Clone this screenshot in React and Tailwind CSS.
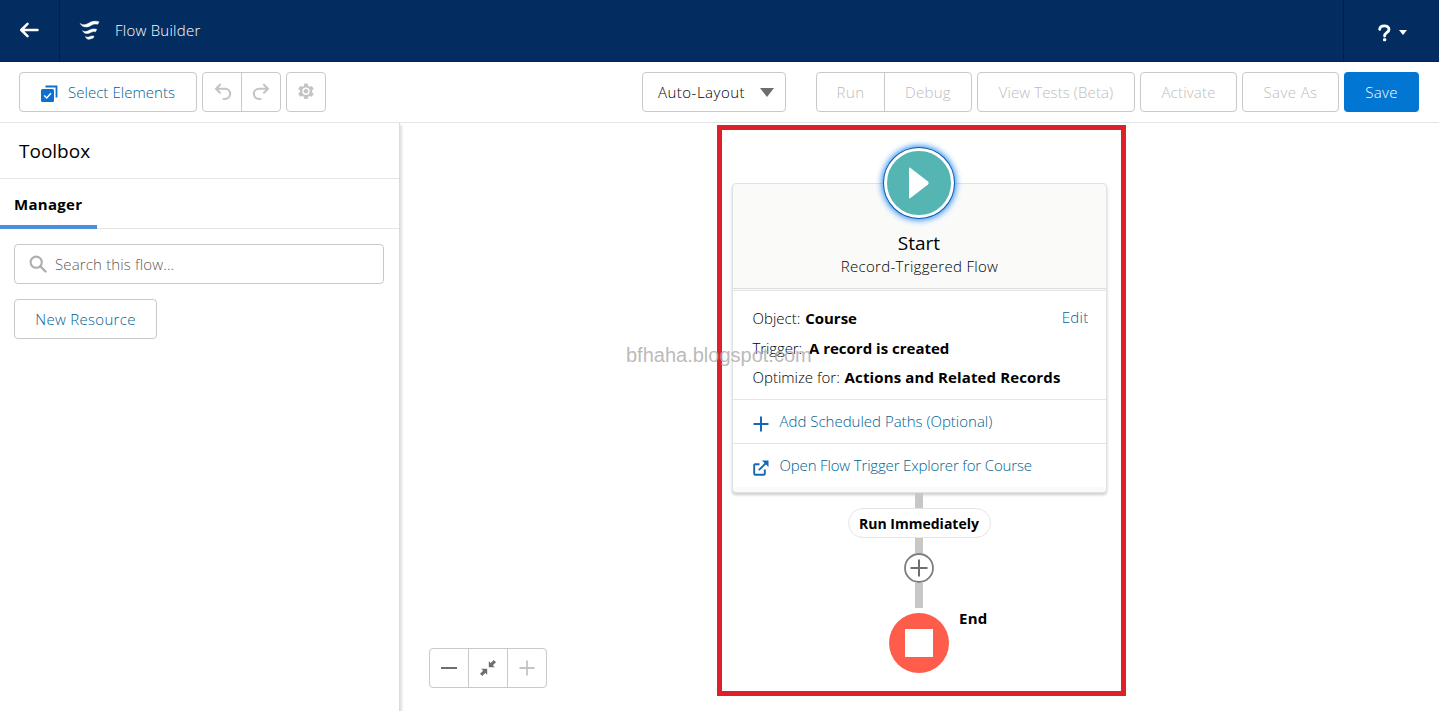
const btn = 'flex h-10 shrink-0 items-center justify-center rounded border border-[#c9c9c9] bg-white';
const disabled = 'text-[#bcbcbc]';
const link = 'text-[#005f94]';

function FlowLogo() {
  return (
    <svg width="22" height="22" viewBox="0 0 22 22" fill="#fff" stroke="#fff" strokeWidth=".5" strokeLinejoin="round">
      <path d="M1.200 3.500C4.500 6 7.500 4.200 10.500 2.700C13.500 1 17 .9 20 1.700L18.700 4.300C15.500 3.700 13.500 4.500 11.500 5.700C8.500 7.500 3.300 7.700 1.200 3.500Z" />
      <path d="M3.600 10.700C6.500 12.500 8.500 11.100 10.500 10.100C12.900 8.800 15.400 8.700 17.700 9.400L16.500 11.700C14.300 11.200 13 11.800 11.500 12.600C9.200 14 5.200 14.200 3.600 10.700Z" />
      <path d="M6.500 16.600C8.300 17.800 9.500 17.200 10.800 16.600C12.200 15.900 13.500 15.800 15 16.200L14 18.300C12.800 18.100 12.200 18.500 11.400 18.900C9.600 19.900 7.300 19.200 6.500 16.600Z" />
    </svg>
  );
}

function UndoIcon({ className }) {
  return (
    <svg className={className} width="18" height="18" viewBox="0 0 18 18" fill="none" stroke="#c4c4c4" strokeWidth="2.100" strokeLinecap="round" strokeLinejoin="round">
      <path d="M6 1.700L2 5.700L6 9.700M2.300 5.700H11A5.100 5.100 0 0 1 11 16H9.500" />
    </svg>
  );
}

function GearIcon() {
  return (
    <svg width="18" height="18" viewBox="0 0 18 18" fill="#c4c4c4">
      <path fillRule="evenodd" d="M7.300 .6h3.400l.5 2.300 1.400.8 2.300-.8 1.900 3-1.800 1.600v1.600l1.800 1.600-1.900 3-2.300-.8-1.400.8-.5 2.300H7.300l-.5-2.300-1.400-.8-2.300.8L1.200 10.700l1.800-1.600V7.500L1.200 5.900l1.900-3 2.300.8 1.400-.8zM9 4.600a3.700 3.700 0 1 0 0 7.400a3.700 3.700 0 0 0 0-7.400z" />
      <circle cx="9" cy="8.300" r="2.300" />
    </svg>
  );
}

function Header() {
  return (
    <header className="flex h-[62px] items-stretch border-b border-[#06214a] bg-[#032d60] text-white">
      <div className="flex w-[60px] items-center border-r border-[#021f45] pb-px pl-5">
        <svg width="19" height="16" viewBox="0 0 19 16" fill="none" stroke="#fff" strokeWidth="2.500" strokeLinecap="round" strokeLinejoin="round">
          <path d="M7.500 1.800L1.300 8L7.500 14.200M1.500 8H17.500" />
        </svg>
      </div>
      <div className="flex flex-1 items-center pl-[19px]">
        <FlowLogo />
        <span className="ml-[14px] tracking-[0.25px]">Flow Builder</span>
      </div>
      <div className="flex w-24 items-center gap-2 border-l border-[#021f45] pl-[34px] pt-1">
        <svg width="13" height="18" viewBox="0 0 13 18" fill="none">
          <path d="M1.700 5.400C1.900 .9 11 .7 11 5.400C11 8.400 6.600 8.300 6.600 12" stroke="#fff" strokeWidth="2.800" strokeLinecap="round" />
          <rect x="5" y="14.200" width="3.200" height="3" rx="1" fill="#fff" />
        </svg>
        <svg width="8" height="5" viewBox="0 0 8 5" fill="#fff"><path d="M0 0H8L4 5Z" /></svg>
      </div>
    </header>
  );
}

function Toolbar() {
  return (
    <div className="flex h-[61px] items-center border-b border-[#e5e5e5] bg-white pl-[19px] pr-5">
      <button className={`${btn} ${link} w-[178px] gap-[10px]`}>
        <svg className="mt-[2px]" width="17" height="17" viewBox="0 0 17 17">
          <path d="M4.500 1.500H15.500V12.500" fill="none" stroke="#0b70cf" strokeWidth="1.800" />
          <rect x="0" y="4" width="13" height="13" rx="1.500" fill="#0b70cf" />
          <path d="M3.200 10.500L5.700 13L10 8.300" fill="none" stroke="#fff" strokeWidth="1.500" />
        </svg>
        <span className="tracking-[0.05px]">Select Elements</span>
      </button>
      <div className={`${btn} ${disabled} ml-[5px] w-[79px]`}>
        <span className="flex h-full w-[39px] items-center justify-center border-r border-[#c9c9c9] pl-px"><UndoIcon /></span>
        <span className="flex flex-1 items-center justify-center"><UndoIcon className="-scale-x-100" /></span>
      </div>
      <button className={`${btn} ml-[5px] w-10`}><GearIcon /></button>
      <button className={`${btn} ml-auto w-36 gap-[15px] pl-1 text-black`}>
        <span className="tracking-[0.5px]">Auto-Layout</span>
        <svg width="14" height="9" viewBox="0 0 14 9" fill="#706e6b"><path d="M0 0H14L7 9Z" /></svg>
      </button>
      <div className={`${btn} ${disabled} ml-[30px] w-[156px]`}>
        <span className="flex h-full w-[68px] items-center justify-center border-r border-[#c9c9c9] tracking-[0.4px]">Run</span>
        <span className="flex-1 text-center tracking-[0.3px]">Debug</span>
      </div>
      <button className={`${btn} ${disabled} ml-[5px] w-[158px] tracking-[0.1px]`}>View Tests (Beta)</button>
      <button className={`${btn} ${disabled} ml-[5px] w-[97px] tracking-[0.2px]`}>Activate</button>
      <button className={`${btn} ${disabled} ml-[5px] w-[97px] tracking-[0.4px]`}>Save As</button>
      <button className="ml-[5px] h-10 w-[75px] rounded bg-[#0176d3] tracking-[0.3px] text-white">Save</button>
    </div>
  );
}

function Sidebar() {
  return (
    <aside className="z-10 flex w-[400px] shrink-0 flex-col border-r border-[#dddbda] bg-white shadow-[2px_2px_2px_rgba(0,0,0,0.12)]">
      <h2 className="flex h-14 items-center border-b border-[#e5e5e5] pl-[19px] pt-[2px] text-[19px] font-normal">Toolbox</h2>
      <div className="flex h-[50px] border-b border-[#e5e5e5]">
        <div className="-mb-px flex w-[97px] items-center border-b-4 border-[#4a8fdb] pl-[14px] pt-1 font-bold tracking-[0.3px]">Manager</div>
      </div>
      <div className="flex flex-col items-start gap-[15px] py-[15px] pl-[14px] pr-[15px]">
        <div className="flex h-10 w-full items-center rounded border border-[#c9c9c9] pl-[14px]">
          <svg width="18" height="18" viewBox="0 0 18 18" fill="none" stroke="#b0adab" strokeWidth="2.100" strokeLinecap="round">
            <circle cx="7.200" cy="7.200" r="5.600" />
            <path d="M11.500 11.500L16.500 16.500" strokeWidth="2.400" />
          </svg>
          <span className="ml-2 tracking-[0.15px] text-[#5c5a58]">Search this flow...</span>
        </div>
        <button className={`${btn} ${link} w-[143px] tracking-[0.3px]`}>New Resource</button>
      </div>
    </aside>
  );
}

function StartCard() {
  return (
    <div className="w-[375px] rounded border border-[#e2e2e2] bg-[#fafaf9] shadow-[0_2px_3px_rgba(0,0,0,0.2)]">
      <div className="flex h-[105px] flex-col items-center border-b border-[#dddddd]">
        <div className="-mt-9 flex size-[70px] shrink-0 items-center justify-center rounded-full border-[3px] border-white bg-[#54b5b3] shadow-[0_0_0_1px_#0b5cab,0_0_6px_2px_#1b84ee]">
          <svg width="22" height="32" viewBox="0 0 22 32" fill="#fff"><path d="M1 1.500Q1 0 2.500 1L20 14.500Q21.500 16 20 17.500L2.500 31Q1 32 1 30.500Z" /></svg>
        </div>
        <div className="mt-[13px] text-[19px] font-normal leading-6">Start</div>
        <div className="pl-px leading-[22px] tracking-[0.3px]">Record-Triggered Flow</div>
      </div>
      <div className="mt-px border-t border-[#e5e5e5] bg-white">
        <div className="flex h-[109px] justify-between border-b border-[#e5e5e5] pl-5 pr-[17px] pt-[13px] leading-[29.5px]">
          <div className="whitespace-nowrap">
            <p>Object: <b className="ml-px font-bold">Course</b></p>
            <p><span className="tracking-[-0.1px]">Trigger:</span> <b className="ml-[3px] font-bold">A record is created</b></p>
            <p>Optimize for: <b className="ml-px font-bold tracking-[0.12px]">Actions and Related Records</b></p>
          </div>
          <a className={`${link} -mt-px tracking-[0.3px]`}>Edit</a>
        </div>
        <div className={`${link} flex h-11 items-center gap-[11px] border-b border-[#e5e5e5] pl-5`}>
          <svg className="mt-1" width="16" height="16" viewBox="0 0 16 16" stroke="#1369b8" strokeWidth="2"><path d="M8 .5V15.500M.5 8H15.500" /></svg>
          <span>Add Scheduled Paths (Optional)</span>
        </div>
        <div className={`${link} flex h-[43px] items-center gap-[11px] pl-5`}>
          <svg className="mt-1" width="16" height="16" viewBox="0 0 16 16" fill="none" stroke="#1369b8" strokeWidth="1.900">
            <path d="M6.500 4.200H2.200Q1.200 4.200 1.200 5.200V13.800Q1.200 14.800 2.200 14.800H10.800Q11.800 14.800 11.800 13.800V9.500M5.800 10.200L13.500 2.500" />
            <path d="M9 .5H15.500V7Z" fill="#1369b8" stroke="none" />
          </svg>
          <span className="tracking-[-0.16px]">Open Flow Trigger Explorer for Course</span>
        </div>
      </div>
      <div className="h-[5px]" />
    </div>
  );
}

function Flow() {
  return (
    <section className="ml-[317px] mt-[2px] flex h-[571px] w-[409px] shrink-0 flex-col items-center border-[5px] border-[#de2128] pr-[5px] pt-[53px]">
      <StartCard />
      <div className="h-[15px] w-2 bg-[#c9c7c5]" />
      <div className="flex h-[30px] w-[143px] items-center justify-center rounded-full border border-[#e5e5e5] bg-white text-[14px] font-bold">Run Immediately</div>
      <div className="h-[15px] w-2 bg-[#c9c7c5]" />
      <svg width="30" height="30" viewBox="0 0 30 30" fill="none" stroke="#807e7c" strokeWidth="1.800">
        <circle cx="15" cy="15" r="14" />
        <path d="M15 6.500V23.500M6.500 15H23.500" strokeWidth="2" stroke="#706e6b" />
      </svg>
      <div className="h-[25px] w-2 bg-[#c9c7c5]" />
      <div className="relative mt-[5px] flex size-[60px] items-center justify-center rounded-full bg-[#ff5d4c]">
        <div className="size-7 bg-white" />
        <span className="absolute -top-[6px] left-[70px] font-bold tracking-[0.3px]">End</span>
      </div>
    </section>
  );
}

function ZoomControls() {
  return (
    <div className="absolute left-[29px] top-[525px] flex h-10 w-[118px] rounded border border-[#c9c9c9] bg-white">
      <span className="flex w-[39px] items-center justify-center border-r border-[#c9c9c9]">
        <svg width="16" height="2" viewBox="0 0 16 2"><path d="M0 1H16" stroke="#706e6b" strokeWidth="2" /></svg>
      </span>
      <span className="flex w-[39px] items-center justify-center border-r border-[#c9c9c9]">
        <svg width="16" height="16" viewBox="0 0 16 16" fill="#706e6b">
          <path d="M8.800 1.200V7.200H14.800L12.900 5.300L16 2.200L13.800 0L10.700 3.100Z" />
          <path d="M7.200 14.800V8.800H1.200L3.100 10.700L0 13.800L2.200 16L5.300 12.900Z" />
        </svg>
      </span>
      <span className="flex flex-1 items-center justify-center">
        <svg width="16" height="16" viewBox="0 0 16 16"><path d="M8 .5V15.500M.5 8H15.500" stroke="#c4c4c4" strokeWidth="1.800" /></svg>
      </span>
    </div>
  );
}

export default function App() {
  return (
    <div className="flex h-[711px] w-[1439px] flex-col overflow-hidden bg-white font-['Open_Sans',sans-serif] text-[15px] font-light text-black">
      <Header />
      <Toolbar />
      <main className="flex min-h-0 flex-1">
        <Sidebar />
        <div className="relative flex flex-1 items-start">
          <Flow />
          <ZoomControls />
          <div className="absolute left-[226px] top-[217px] font-['Liberation_Sans',sans-serif] text-[20px] font-normal leading-[30px] text-[#a8a8a8]/80">bfhaha.blogspot.com</div>
        </div>
      </main>
    </div>
  );
}
